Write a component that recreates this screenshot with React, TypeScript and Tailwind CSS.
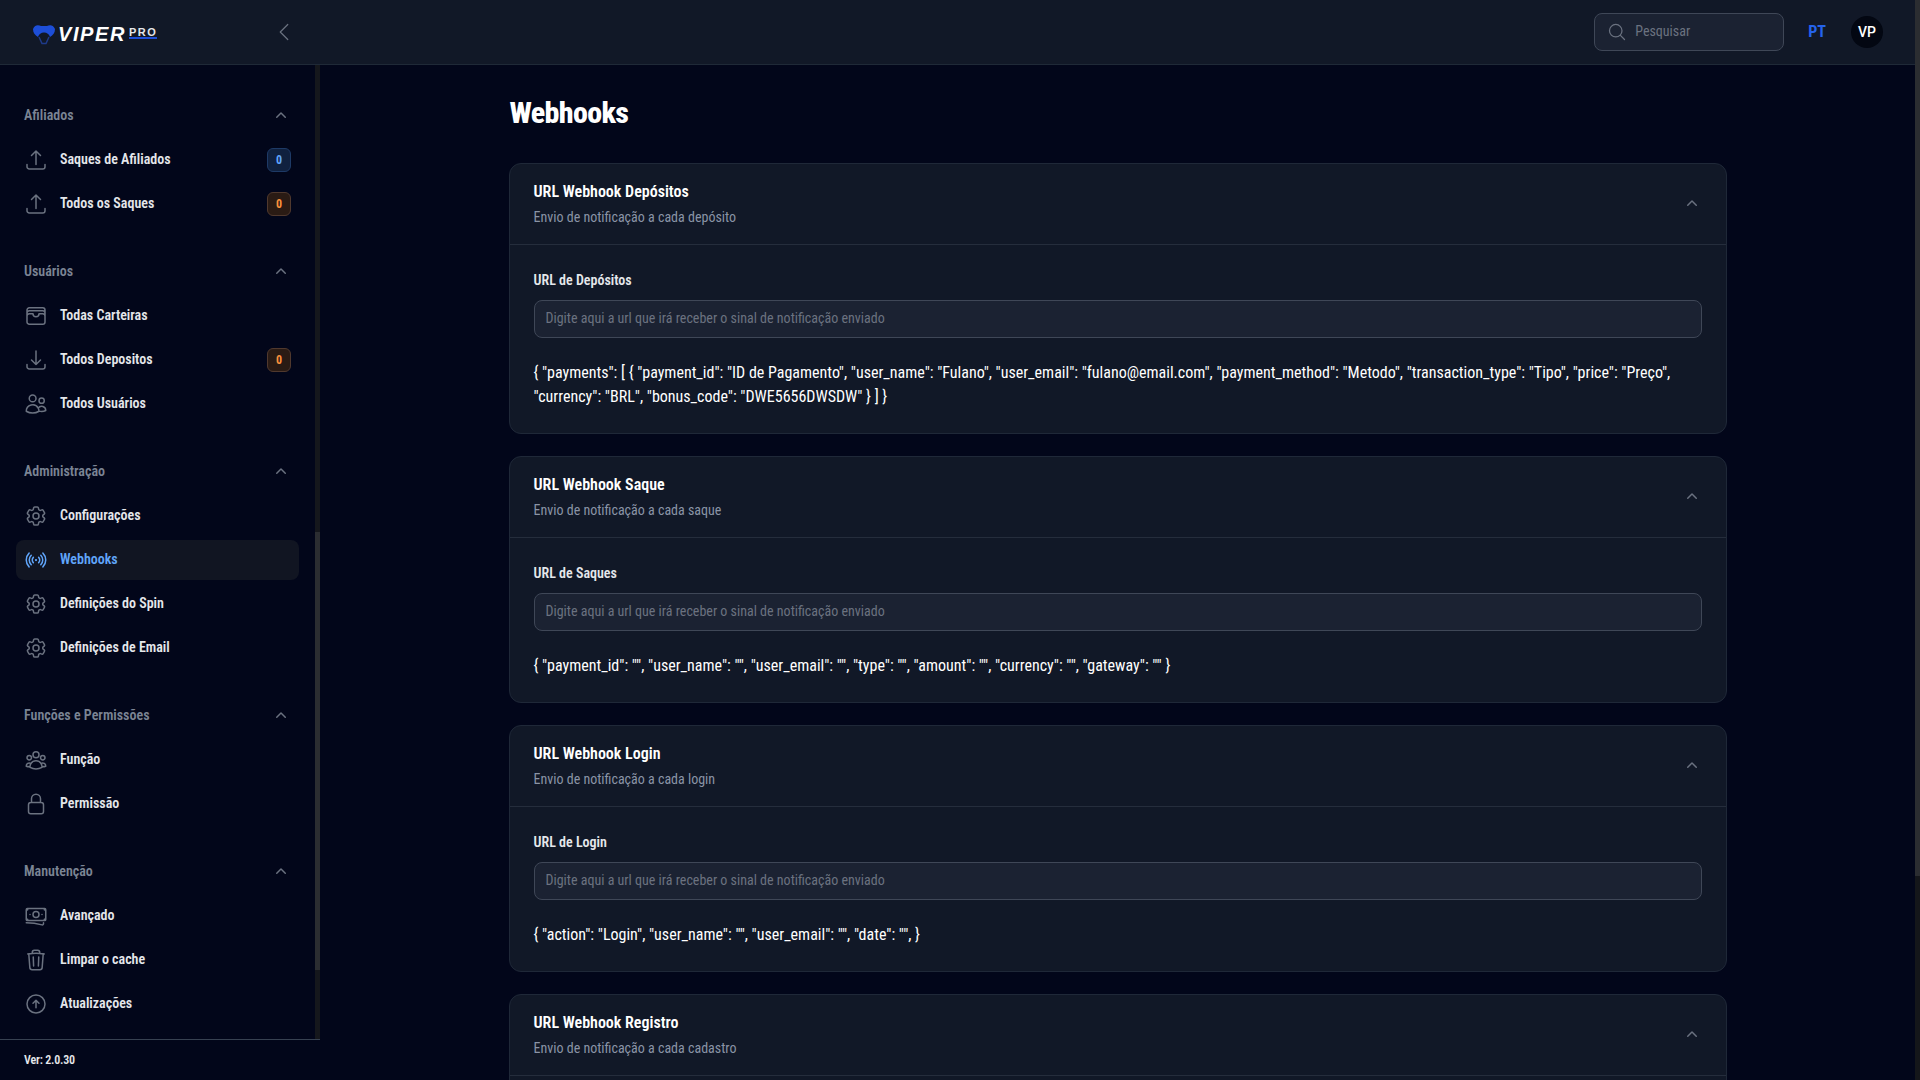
import {
  HiMiniChevronUp,
  HiOutlineArrowDownTray,
  HiOutlineArrowUpCircle,
  HiOutlineArrowUpTray,
  HiOutlineBanknotes,
  HiOutlineChevronLeft,
  HiOutlineCog6Tooth,
  HiOutlineLockClosed,
  HiOutlineMagnifyingGlass,
  HiOutlineSignal,
  HiOutlineTrash,
  HiOutlineUserGroup,
  HiOutlineUsers,
  HiOutlineWallet,
} from "react-icons/hi2";

const nav = [
  {
    label: "Afiliados",
    items: [
      { name: "Saques de Afiliados", icon: HiOutlineArrowUpTray, badge: "blue" },
      { name: "Todos os Saques", icon: HiOutlineArrowUpTray, badge: "orange" },
    ],
  },
  {
    label: "Usuários",
    items: [
      { name: "Todas Carteiras", icon: HiOutlineWallet },
      { name: "Todos Depositos", icon: HiOutlineArrowDownTray, badge: "orange" },
      { name: "Todos Usuários", icon: HiOutlineUsers },
    ],
  },
  {
    label: "Administração",
    items: [
      { name: "Configurações", icon: HiOutlineCog6Tooth },
      { name: "Webhooks", icon: HiOutlineSignal, active: true },
      { name: "Definições do Spin", icon: HiOutlineCog6Tooth },
      { name: "Definições de Email", icon: HiOutlineCog6Tooth },
    ],
  },
  {
    label: "Funções e Permissões",
    items: [
      { name: "Função", icon: HiOutlineUserGroup },
      { name: "Permissão", icon: HiOutlineLockClosed },
    ],
  },
  {
    label: "Manutenção",
    items: [
      { name: "Avançado", icon: HiOutlineBanknotes },
      { name: "Limpar o cache", icon: HiOutlineTrash },
      { name: "Atualizações", icon: HiOutlineArrowUpCircle },
    ],
  },
];

const webhooks = [
  {
    title: "URL Webhook Depósitos",
    desc: "Envio de notificação a cada depósito",
    label: "URL de Depósitos",
    json: '{ "payments": [ { "payment_id": "ID de Pagamento", "user_name": "Fulano", "user_email": "fulano@email.com", "payment_method": "Metodo", "transaction_type": "Tipo", "price": "Preço", "currency": "BRL", "bonus_code": "DWE5656DWSDW" } ] }',
  },
  {
    title: "URL Webhook Saque",
    desc: "Envio de notificação a cada saque",
    label: "URL de Saques",
    json: '{ "payment_id": "", "user_name": "", "user_email": "", "type": "", "amount": "", "currency": "", "gateway": "" }',
  },
  {
    title: "URL Webhook Login",
    desc: "Envio de notificação a cada login",
    label: "URL de Login",
    json: '{ "action": "Login", "user_name": "", "user_email": "", "date": "", }',
  },
  {
    title: "URL Webhook Registro",
    desc: "Envio de notificação a cada cadastro",
    label: "URL de Registro",
    json: '{ "user_name": "", "user_email": "", "date": "", }',
  },
];

function Logo() {
  return (
    <div className="mt-[3px] flex items-center gap-[3px]">
      <svg width="22" height="22" viewBox="0 0 22 22">
        <path d="M0 6 C2 1 6 2 8 3 L14 3 C16 2 20 1 22 6 C22 10 20 12 17 14 C16 11 14 9.5 11 9.5 C8 9.5 6 11 5 14 C2 12 0 10 0 6Z" fill="#1d4ed8" />
        <path d="M6 14 L9 20.5 L13 20.5 L16 14" fill="none" stroke="#1e3a8a" strokeWidth="1.5" />
      </svg>
      <span className="text-[20px] leading-none font-bold tracking-[1.6px] text-white italic font-['Liberation_Sans',sans-serif] [font-stretch:normal]">
        VIPER
      </span>
      <span className="mb-[1px] border-b-2 border-[#1d4ed8] text-[11px] leading-[10px] font-bold tracking-[1.5px] text-gray-200 font-['Liberation_Sans',sans-serif] [font-stretch:normal]">
        PRO
      </span>
    </div>
  );
}

function Sidebar() {
  return (
    <aside className="flex h-[1015px] w-[320px] shrink-0 flex-col">
      <div className="flex min-h-0 flex-1">
        <nav className="flex-1 overflow-hidden pt-[38px]">
          {nav.map((group) => (
            <div key={group.label} className="mb-[35px]">
              <div className="flex h-[24px] items-center justify-between pr-[24px] pl-[24px]">
                <span className="text-[14px] font-semibold text-[#7b8494]">{group.label}</span>
                <HiMiniChevronUp className="mt-[1px] text-[#6b7280]" size={20} />
              </div>
              <ul className="mt-[13px] flex flex-col gap-[4px] px-[16px]">
                {group.items.map((item) => (
                  <li
                    key={item.name}
                    className={`flex h-[40px] w-[283px] items-center gap-3 rounded-lg px-2 ${item.active ? "bg-[#111522]" : ""}`}
                  >
                    <item.icon size={24} className={item.active ? "text-[#60a5fa]" : "text-[#6b7280]"} />
                    <span className={`flex-1 pb-[2px] text-[14px] font-semibold ${item.active ? "text-[#60a5fa]" : "text-[#e5e7eb]"}`}>
                      {item.name}
                    </span>
                    {item.badge === "blue" && (
                      <span className="flex h-[24px] w-[24px] items-center justify-center rounded-md border border-[#1e3a66] bg-[#10213f] text-[12px] font-bold text-[#60a5fa]">
                        0
                      </span>
                    )}
                    {item.badge === "orange" && (
                      <span className="flex h-[24px] w-[24px] items-center justify-center rounded-md border border-[#50392e] bg-[#2a1b14] text-[12px] font-bold text-[#fb923c]">
                        0
                      </span>
                    )}
                  </li>
                ))}
              </ul>
            </div>
          ))}
        </nav>
        {/* the scrollbar as it stands in the screenshot */}
        <div className="w-[5px] shrink-0 bg-[#15171c] pt-[467px]">
          <div className="h-[438px] bg-[#2b2d31]" />
        </div>
      </div>
      <div className="flex h-[41px] items-center border-t border-[#374151] pl-[24px] text-[12px] font-semibold tracking-[-0.2px] text-[#e5e7eb]">
        Ver: 2.0.30
      </div>
    </aside>
  );
}

export default function App() {
  return (
    <div className="flex h-screen overflow-hidden bg-[#02061a] font-['Roboto_Condensed',Roboto,sans-serif] [font-stretch:condensed]">
      <div className="flex min-w-0 flex-1 flex-col">
        <header className="flex h-[65px] shrink-0 items-center border-b border-[#1f2937] bg-[#111827]">
          <div className="flex w-[320px] items-center justify-between pr-[24px] pl-[33px]">
            <Logo />
            <HiOutlineChevronLeft size={24} strokeWidth={1.2} className="text-[#6b7280]" />
          </div>
          <div className="ml-auto flex items-center pr-[32px]">
            <div className="flex h-[38px] w-[190px] items-center gap-[8px] rounded-lg border border-[#3f4757] bg-[#1b2232] px-[12px]">
              <HiOutlineMagnifyingGlass size={20} className="shrink-0 text-[#6b7280]" />
              <input placeholder="Pesquisar" className="w-full bg-transparent pb-[2px] text-[14px] outline-none placeholder:text-[#6b7280]" />
            </div>
            <span className="ml-[24px] text-[16px] font-bold text-[#2563eb]">PT</span>
            <span className="ml-[25px] flex h-[32px] w-[32px] items-center justify-center rounded-full bg-[#030712] font-['Roboto',sans-serif] text-[14px] font-medium text-white [font-stretch:normal]">
              VP
            </span>
          </div>
        </header>
        <div className="flex min-h-0 flex-1 overflow-hidden">
          <Sidebar />
          <main className="min-w-0 flex-1">
            <div className="mx-auto max-w-[1280px] px-[31px] pt-[30px]">
              <h1 className="pl-[1px] text-[30px] leading-[36px] font-extrabold tracking-[-0.65px] text-white">Webhooks</h1>
              <div className="mt-[32px] flex flex-col gap-[22px]">
                {webhooks.map((hook) => (
                  <section key={hook.title} className="rounded-xl border border-[#1f2838] bg-[#111827]">
                    <div className="flex h-[81px] items-center justify-between border-b border-[#252d3c] px-6">
                      <div className="pb-[2px]">
                        <h2 className="text-[16px] leading-[24px] font-semibold text-white">{hook.title}</h2>
                        <p className="mt-[3px] text-[14px] leading-[20px] text-[#8a94a6]">{hook.desc}</p>
                      </div>
                      <HiMiniChevronUp size={20} className="text-[#6b7280]" />
                    </div>
                    <div className="px-6 pt-[23px] pb-[24px]">
                      <label className="block text-[14px] leading-[24px] font-semibold text-[#e5e7eb]">{hook.label}</label>
                      <input
                        placeholder="Digite aqui a url que irá receber o sinal de notificação enviado"
                        className="mt-[8px] block h-[38px] w-full rounded-lg border border-[#3f4757] bg-[#1b2232] px-[11px] pb-[2px] text-[14px] text-white outline-none placeholder:text-[#6b7280]"
                      />
                      <p className="mt-[23px] text-[16px] leading-[24px] text-white">{hook.json}</p>
                    </div>
                  </section>
                ))}
              </div>
            </div>
          </main>
        </div>
      </div>
      {/* page scrollbar */}
      <div className="w-[5px] shrink-0 bg-[#14161a]">
        <div className="h-[876px] bg-[#2b2d31]" />
      </div>
    </div>
  );
}
